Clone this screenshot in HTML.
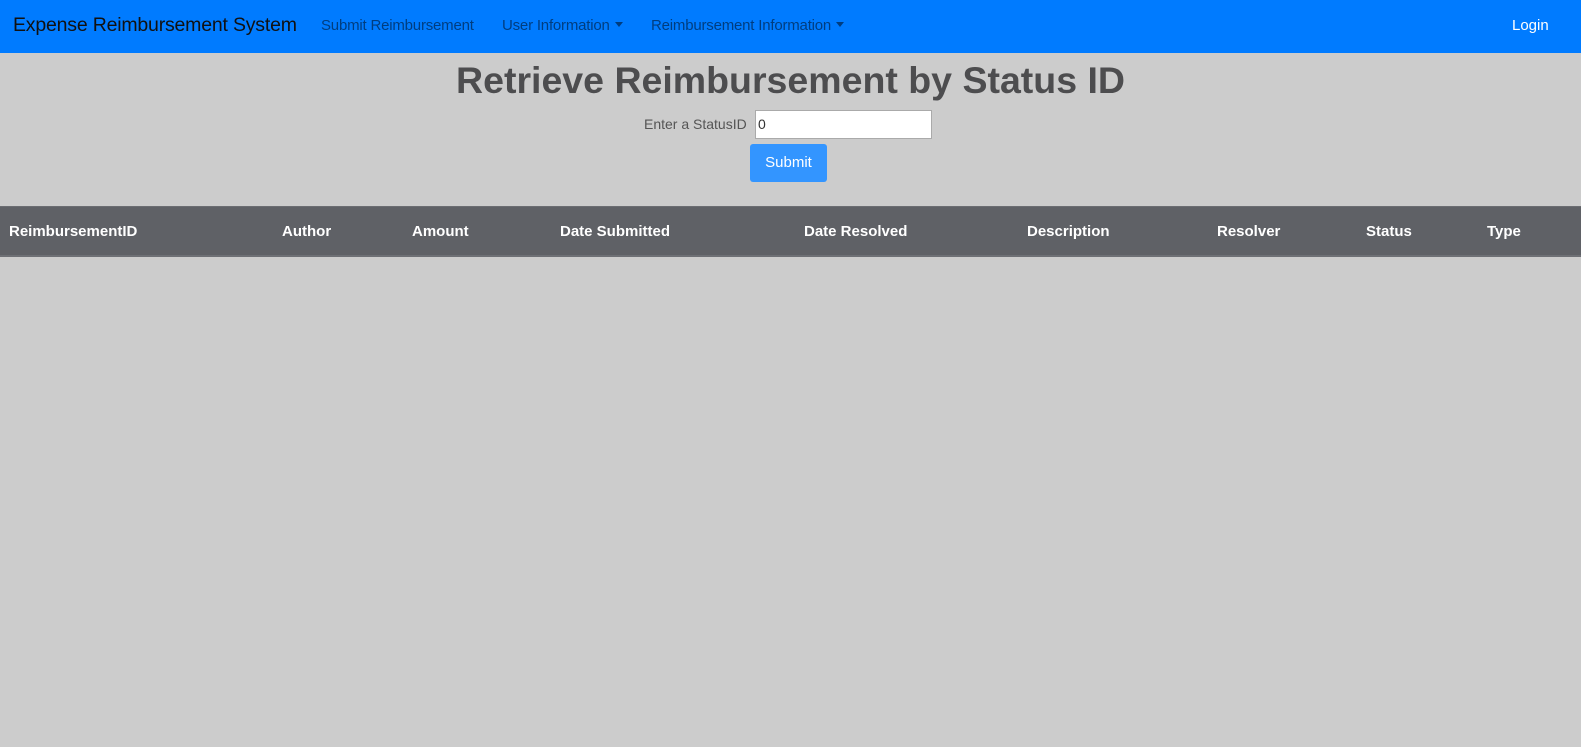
<!DOCTYPE html>
<html><head><meta charset="utf-8"><style>
*{margin:0;padding:0;box-sizing:border-box}
body{width:1581px;height:747px;background:#cccccc;font-family:"Liberation Sans",sans-serif;position:relative;overflow:hidden}
.nav{position:absolute;left:0;top:0;width:1581px;height:53px;background:#007bff}
.nav span{position:absolute;top:0;line-height:51px;white-space:nowrap}
.brand{left:13px;font-size:19.5px;color:#111;letter-spacing:-0.2px}
.ni{font-size:15px;color:rgba(0,0,0,.5);letter-spacing:-0.2px}
.caret{display:inline-block;width:0;height:0;border-left:4px solid transparent;border-right:4px solid transparent;border-top:5px solid rgba(0,0,0,.5);margin-left:5px;vertical-align:3px}
h1{position:absolute;left:0;width:1581px;top:57px;text-align:center;font-size:37.5px;font-weight:bold;color:#4d4d4f;line-height:46px}
.lbl{position:absolute;left:644px;top:116px;font-size:14px;color:#555}
.inp{position:absolute;left:755px;top:110px;width:177px;height:29px;background:#fff;border:1px solid #aaa;font-size:14px;color:#333;padding:5px 2px;line-height:17px}
.btn{position:absolute;left:750px;top:144px;width:77px;height:38px;background:#3395ff;border-radius:3px;color:#fff;font-size:15px;text-align:center;line-height:38px}
.th{position:absolute;left:0;top:206px;width:1581px;height:51px;background:#5f6166;border-top:1px solid #6b6d72;border-bottom:2px solid #6e7075}
.th span{position:absolute;top:16px;color:#fff;font-weight:bold;font-size:15px}
</style></head><body>
<div class="nav">
<span class="brand">Expense Reimbursement System</span>
<span class="ni" style="left:321px">Submit Reimbursement</span>
<span class="ni" style="left:502px">User Information<i class="caret"></i></span>
<span class="ni" style="left:651px">Reimbursement Information<i class="caret"></i></span>
<span style="left:1512px;font-size:15px;color:#fff">Login</span>
</div>
<h1>Retrieve Reimbursement by Status ID</h1>
<div class="lbl">Enter a StatusID</div>
<div class="inp">0</div>
<div class="btn">Submit</div>
<div class="th">
<span style="left:9px">ReimbursementID</span>
<span style="left:282px">Author</span>
<span style="left:412px">Amount</span>
<span style="left:560px">Date Submitted</span>
<span style="left:804px">Date Resolved</span>
<span style="left:1027px">Description</span>
<span style="left:1217px">Resolver</span>
<span style="left:1366px">Status</span>
<span style="left:1487px">Type</span>
</div>
</body></html>
